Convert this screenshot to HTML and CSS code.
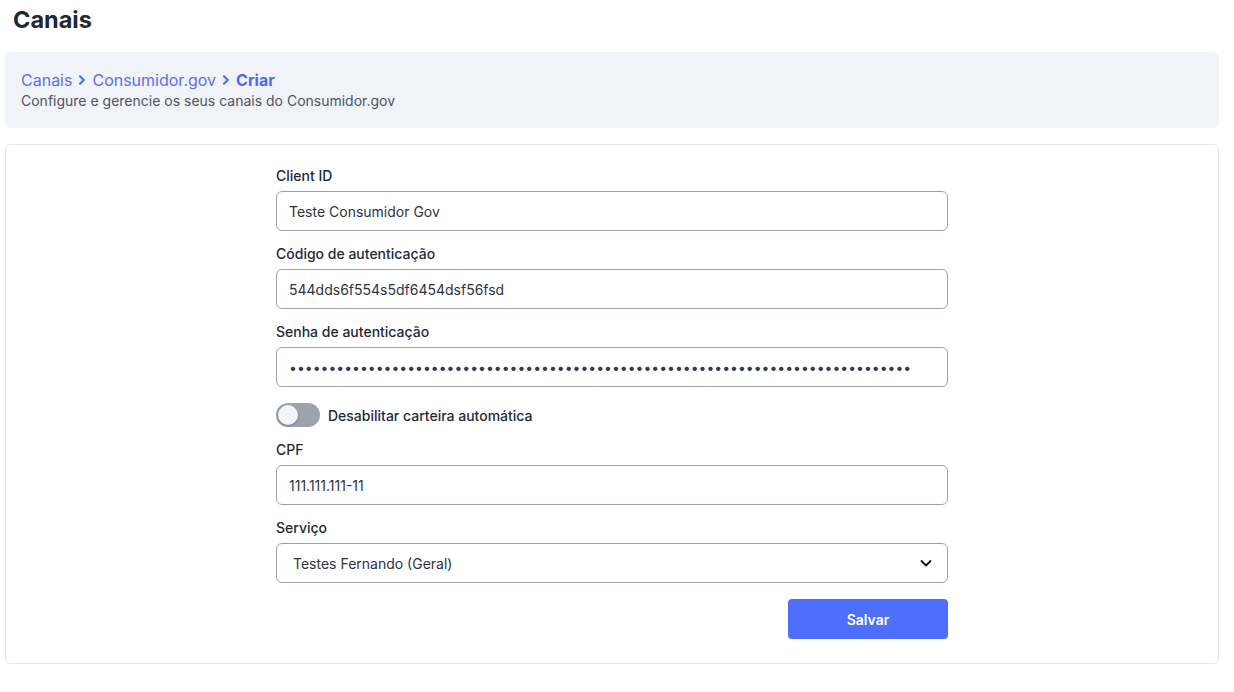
FILE: index.html
```html
<!DOCTYPE html>
<html lang="pt-BR">
<head>
  <meta charset="UTF-8">
  <meta name="viewport" content="width=device-width, initial-scale=1.0">
  <title>Canais - Consumidor.gov</title>
  <link rel="stylesheet" href="styles.css">
</head>
<body>
  <div class="page">
    <h1 class="page-title">Canais</h1>

    <div class="header-box">
      <div class="breadcrumb">
        <a href="#" class="crumb">Canais</a>
        <svg class="crumb-sep" viewBox="0 0 10 10" width="10" height="10"><path d="M3 1.2 L6.8 5 L3 8.8" fill="none" stroke="currentColor" stroke-width="2" stroke-linecap="round" stroke-linejoin="round"/></svg>
        <a href="#" class="crumb">Consumidor.gov</a>
        <svg class="crumb-sep" viewBox="0 0 10 10" width="10" height="10"><path d="M3 1.2 L6.8 5 L3 8.8" fill="none" stroke="currentColor" stroke-width="2" stroke-linecap="round" stroke-linejoin="round"/></svg>
        <span class="crumb current">Criar</span>
      </div>
      <div class="subtitle">Configure e gerencie os seus canais do Consumidor.gov</div>
    </div>

    <div class="card">
      <form class="form">
        <div class="field">
          <label class="label" for="clientId">Client ID</label>
          <input class="input" id="clientId" type="text" value="Teste Consumidor Gov">
        </div>
        <div class="field">
          <label class="label" for="authCode">Código de autenticação</label>
          <input class="input" id="authCode" type="text" value="544dds6f554s5df6454dsf56fsd">
        </div>
        <div class="field">
          <label class="label" for="authPass">Senha de autenticação</label>
          <input class="input" id="authPass" type="password" value="xxxxxxxxxxxxxxxxxxxxxxxxxxxxxxxxxxxxxxxxxxxxxxxxxxxxxxxxxxxxxxxxxxxxxxxxxxxxxxx">
        </div>
        <label class="toggle-row">
          <span class="toggle"><span class="toggle-knob"></span></span>
          <span class="toggle-label">Desabilitar carteira automática</span>
        </label>
        <div class="field">
          <label class="label" for="cpf">CPF</label>
          <input class="input" id="cpf" type="text" value="111.111.111-11">
        </div>
        <div class="field">
          <label class="label" for="servico">Serviço</label>
          <div class="select">
            <span class="select-value">Testes Fernando (Geral)</span>
            <svg class="select-arrow" viewBox="0 0 14 14" width="14" height="14"><path d="M2.5 5 L7 9.5 L11.5 5" fill="none" stroke="#111" stroke-width="1.8" stroke-linecap="round" stroke-linejoin="round"/></svg>
          </div>
        </div>
        <div class="actions">
          <button type="button" class="btn-save">Salvar</button>
        </div>
      </form>
    </div>
  </div>
</body>
</html>
```

FILE: styles.css
```css
body {
  margin: 0;
  font-family: Inter, "Noto Sans", sans-serif;
  color: #1f2937;
  background: #fff;
}
.page {
  padding: 0 15px 0 5px;
}
.page-title {
  margin: 0;
  padding: 6px 0 0 8px;
  height: 52px;
  box-sizing: border-box;
  font-size: 23.5px;
  font-weight: 700;
  line-height: 28px;
  color: #222733;
}
.header-box {
  background: #f0f3f8;
  border-radius: 6px;
  padding: 17px 16px 16px;
  height: 76px;
  box-sizing: border-box;
}
.breadcrumb {
  display: flex;
  align-items: center;
  gap: 5px;
  font-size: 16px;
  line-height: 22px;
}
.crumb {
  color: #5a6ff3;
  text-decoration: none;
}
.crumb.current {
  font-weight: 700;
  color: #4b68f5;
}
.crumb-sep {
  color: #4b68f5;
}
.subtitle {
  font-size: 14px;
  line-height: 20px;
  color: #4b5563;
}
.card {
  margin-top: 16px;
  border: 1px solid #e5e7eb;
  border-radius: 6px;
  padding: 21px 0 24px;
}
.form {
  width: 672px;
  margin: 0 auto;
  display: flex;
  flex-direction: column;
  gap: 13px;
}
.field {
  display: flex;
  flex-direction: column;
}
.label {
  font-size: 14px;
  font-weight: 500;
  line-height: 20px;
  margin-bottom: 5px;
  color: #1f2937;
}
.input,
.select {
  height: 40px;
  box-sizing: border-box;
  border: 1px solid #9ca3af;
  border-radius: 6px;
  padding: 0 12px;
  font-family: Inter, "Noto Sans", sans-serif;
  font-size: 14px;
  color: #2d3340;
  background: #fff;
  outline: none;
}
.input[type="password"] {
  color: #333a48;
}
.select {
  display: flex;
  align-items: center;
  justify-content: space-between;
  padding: 0 16px;
}
.select-arrow {
  margin-right: -2px;
}
.toggle-row {
  display: flex;
  align-items: center;
  gap: 8px;
  margin-top: 3px;
  cursor: pointer;
}
.toggle {
  width: 44px;
  height: 24px;
  border-radius: 12px;
  background: #9ca3af;
  position: relative;
}
.toggle-knob {
  position: absolute;
  top: 2px;
  left: 2px;
  width: 20px;
  height: 20px;
  border-radius: 50%;
  background: #f3f4f8;
  box-shadow: 0 1px 3px rgba(0, 0, 0, 0.25);
}
.toggle-label {
  font-size: 14px;
  font-weight: 500;
  color: #1f2937;
}
.actions {
  display: flex;
  justify-content: flex-end;
  margin-top: 3px;
}
.btn-save {
  width: 160px;
  height: 40px;
  border: none;
  border-radius: 4px;
  background: #4e6ffb;
  color: #fff;
  font-family: Inter, "Noto Sans", sans-serif;
  font-size: 14px;
  font-weight: 600;
  cursor: pointer;
}
```
